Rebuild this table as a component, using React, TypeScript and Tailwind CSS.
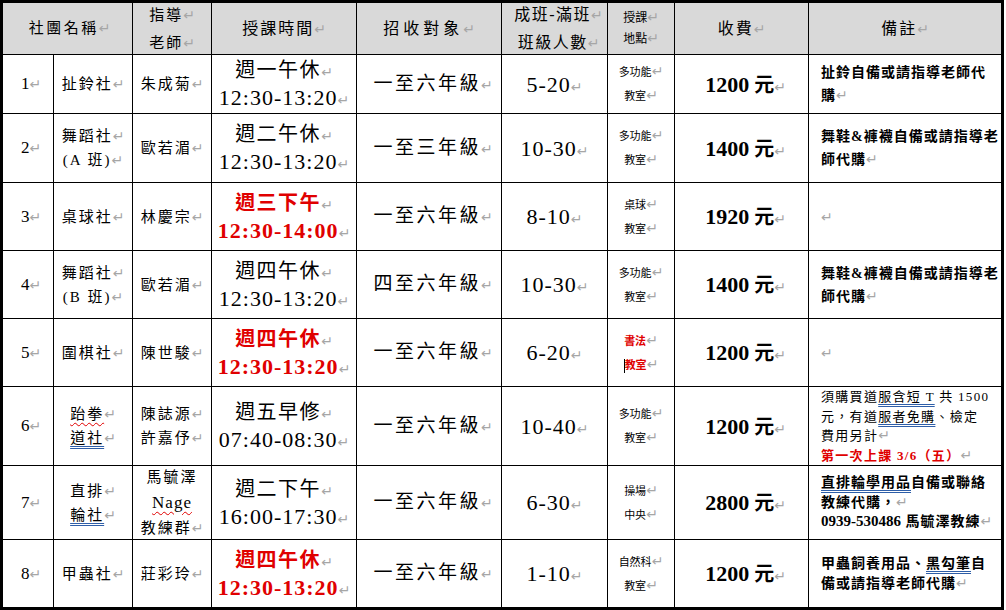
import React, { ReactNode } from "react";

function M() {
  return (
    <span className="font-['DejaVu_Sans',sans-serif] text-[14px] leading-none font-normal text-[#a6a6a6] tracking-normal no-underline">
      ↵
    </span>
  );
}

const blueU = "underline decoration-double decoration-[#2e5ea8] underline-offset-[3px] decoration-1";
const redW = "underline decoration-wavy decoration-[#e00000] underline-offset-[3px] decoration-1";

const cell = "bg-white flex flex-col items-center justify-center text-center";

function L({ children }: { children: ReactNode }) {
  return <div className="whitespace-nowrap">{children}</div>;
}

function Loc({ a, b, red }: { a: string; b: string; red?: boolean }) {
  return (
    <div className={`text-[11px] leading-[24px] ${red ? "text-[#e00000] font-bold" : "text-black"}`}>
      <div className="whitespace-nowrap">
        {a}
        <M />
      </div>
      <div className="whitespace-nowrap">
        {red ? <span className="inline-block w-px h-[14px] bg-black align-middle" /> : null}
        {b}
        <M />
      </div>
    </div>
  );
}

type Row = {
  n: string;
  name: ReactNode;
  teacher: ReactNode;
  day: string;
  time: string;
  red?: boolean;
  target: string;
  size: string;
  loc: ReactNode;
  fee: string;
  note: ReactNode;
};

const noteA = (
  <div className="font-bold text-[14px] leading-[23px] tracking-[1px]">
    <L>扯鈴自備或請指導老師代</L>
    <L>
      購<M />
    </L>
  </div>
);

const noteB = (
  <div className="font-bold text-[14px] leading-[23px] tracking-[1px]">
    <L>舞鞋&amp;褲襪自備或請指導老</L>
    <L>
      師代購<M />
    </L>
  </div>
);

const noteEmpty = (
  <div className="leading-[20px]">
    <M />
  </div>
);

const note6 = (
  <div className="text-[13px] leading-[19.5px] tracking-[1.3px]">
    <L>
      須購買道<span className={blueU}>服含短 T</span> 共 1500
    </L>
    <L>
      元，有道<span className={blueU}>服者免購</span>、檢定
    </L>
    <L>
      費用另計<M />
    </L>
    <L>
      <span className="font-bold text-[#e00000] tracking-[1.3px]">第一次上課 3/6（五）</span>
      <M />
    </L>
  </div>
);

const note7 = (
  <div className="font-bold text-[14px] leading-[19.5px] tracking-[1px]">
    <L>
      <span className={blueU}>直排輪學用品</span>自備或聯絡
    </L>
    <L>
      教練代購，<M />
    </L>
    <L>
      <span className="text-[15px] tracking-normal">0939-530486</span> 馬毓澤教練
      <M />
    </L>
  </div>
);

const note8 = (
  <div className="font-bold text-[14px] leading-[20px] tracking-[1px]">
    <L>
      甲蟲飼養用品、<span className={blueU}>黑勾筆</span>自
    </L>
    <L>
      備或請指導老師代購<M />
    </L>
  </div>
);

const rows: Row[] = [
  {
    n: "1",
    name: (
      <L>
        扯鈴社<M />
      </L>
    ),
    teacher: (
      <L>
        朱成菊<M />
      </L>
    ),
    day: "週一午休",
    time: "12:30-13:20",
    target: "一至六年級",
    size: "5-20",
    loc: <Loc a="多功能" b="教室" />,
    fee: "1200",
    note: noteA,
  },
  {
    n: "2",
    name: (
      <>
        <L>
          舞蹈社<M />
        </L>
        <L>
          (A 班)<M />
        </L>
      </>
    ),
    teacher: (
      <L>
        歐若湄<M />
      </L>
    ),
    day: "週二午休",
    time: "12:30-13:20",
    target: "一至三年級",
    size: "10-30",
    loc: <Loc a="多功能" b="教室" />,
    fee: "1400",
    note: noteB,
  },
  {
    n: "3",
    name: (
      <L>
        桌球社<M />
      </L>
    ),
    teacher: (
      <L>
        林慶宗<M />
      </L>
    ),
    day: "週三下午",
    time: "12:30-14:00",
    red: true,
    target: "一至六年級",
    size: "8-10",
    loc: <Loc a="桌球" b="教室" />,
    fee: "1920",
    note: noteEmpty,
  },
  {
    n: "4",
    name: (
      <>
        <L>
          舞蹈社<M />
        </L>
        <L>
          (B 班)<M />
        </L>
      </>
    ),
    teacher: (
      <L>
        歐若湄<M />
      </L>
    ),
    day: "週四午休",
    time: "12:30-13:20",
    target: "四至六年級",
    size: "10-30",
    loc: <Loc a="多功能" b="教室" />,
    fee: "1400",
    note: noteB,
  },
  {
    n: "5",
    name: (
      <L>
        圍棋社<M />
      </L>
    ),
    teacher: (
      <L>
        陳世駿<M />
      </L>
    ),
    day: "週四午休",
    time: "12:30-13:20",
    red: true,
    target: "一至六年級",
    size: "6-20",
    loc: <Loc a="書法" b="教室" red />,
    fee: "1200",
    note: noteEmpty,
  },
  {
    n: "6",
    name: (
      <>
        <L>
          <span className={redW}>跆拳</span>
          <M />
        </L>
        <L>
          <span className={blueU}>道社</span>
          <M />
        </L>
      </>
    ),
    teacher: (
      <>
        <L>
          陳誌源<M />
        </L>
        <L>
          許嘉伃<M />
        </L>
      </>
    ),
    day: "週五早修",
    time: "07:40-08:30",
    target: "一至六年級",
    size: "10-40",
    loc: <Loc a="多功能" b="教室" />,
    fee: "1200",
    note: note6,
  },
  {
    n: "7",
    name: (
      <>
        <L>
          直排<M />
        </L>
        <L>
          <span className={blueU}>輪社</span>
          <M />
        </L>
      </>
    ),
    teacher: (
      <div className="leading-[25px]">
        <L>馬毓澤</L>
        <L>
          <span className={`${redW} text-[17px] tracking-[1px]`}>Nage</span>
        </L>
        <L>
          教練群<M />
        </L>
      </div>
    ),
    day: "週二下午",
    time: "16:00-17:30",
    target: "一至六年級",
    size: "6-30",
    loc: <Loc a="操場" b="中央" />,
    fee: "2800",
    note: note7,
  },
  {
    n: "8",
    name: (
      <L>
        甲蟲社<M />
      </L>
    ),
    teacher: (
      <L>
        莊彩玲<M />
      </L>
    ),
    day: "週四午休",
    time: "12:30-13:20",
    red: true,
    target: "一至六年級",
    size: "1-10",
    loc: <Loc a="自然科" b="教室" />,
    fee: "1200",
    note: note8,
  },
];

export default function App() {
  return (
    <div className="w-[1006px] h-[610px] bg-white overflow-hidden">
      <div className="w-[1004px] h-[610px] border-[3px] border-black bg-black grid gap-px grid-cols-[50px_78px_78px_144px_144px_105px_66px_133px_192px] grid-rows-[51px_58px_68px_67px_67px_67px_78px_73px_67px] font-['Liberation_Serif','Noto_Sans_CJK_TC',serif] text-black">
        <div className="col-span-2 bg-[#d9d9d9] flex items-center justify-center text-[15px] tracking-[2.5px] pl-1">
          <span>
            社團名稱<M />
          </span>
        </div>
        <div className="bg-[#d9d9d9] flex flex-col items-center justify-center text-[15px] leading-[28px] tracking-[2px]">
          <L>
            指導<M />
          </L>
          <L>
            老師<M />
          </L>
        </div>
        <div className="bg-[#d9d9d9] flex items-center justify-center text-[16px] tracking-[2px]">
          <span>
            授課時間<M />
          </span>
        </div>
        <div className="bg-[#d9d9d9] flex items-center justify-center text-[16px] tracking-[4px]">
          <span>
            招收對象<M />
          </span>
        </div>
        <div className="bg-[#d9d9d9] flex flex-col items-center justify-center text-[16px] leading-[28px] tracking-[1.5px] pl-2">
          <L>
            成班-滿班<M />
          </L>
          <L>
            班級人數<M />
          </L>
        </div>
        <div className="bg-[#d9d9d9] flex flex-col items-center justify-center text-[12px] leading-[21px]">
          <L>
            授課<M />
          </L>
          <L>
            地點<M />
          </L>
        </div>
        <div className="bg-[#d9d9d9] flex items-center justify-center text-[16px] tracking-[2px]">
          <span>
            收費<M />
          </span>
        </div>
        <div className="bg-[#d9d9d9] flex items-center justify-center text-[16px] tracking-[2px]">
          <span>
            備註<M />
          </span>
        </div>

        {rows.map((r) => (
          <React.Fragment key={r.n}>
            <div className={`${cell} text-[17px] pl-[6px]`}>
              <span>
                {r.n}
                <M />
              </span>
            </div>
            <div className={`${cell} text-[15px] leading-[24px] tracking-[2px]`}>{r.name}</div>
            <div className={`${cell} text-[15px] leading-[24px] tracking-[2px]`}>{r.teacher}</div>
            <div className={`${cell} ${r.red ? "text-[#e00000] font-bold" : "text-black"}`}>
              <div className="text-[20px] leading-[27px] tracking-[1.5px] whitespace-nowrap">
                {r.day}
                <M />
              </div>
              <div className="text-[22px] leading-[27px] tracking-[1px] whitespace-nowrap">
                {r.time}
                <M />
              </div>
            </div>
            <div className={`${cell} text-[19px] tracking-[2.5px] pl-2`}>
              <span className="whitespace-nowrap">
                {r.target}
                <M />
              </span>
            </div>
            <div className={`${cell} text-[22px] tracking-[1px]`}>
              <span className="whitespace-nowrap">
                {r.size}
                <M />
              </span>
            </div>
            <div className={cell}>{r.loc}</div>
            <div className={`${cell} font-bold pl-2`}>
              <span className="whitespace-nowrap">
                <span className="text-[22px]">{r.fee}</span>
                <span className="text-[20px]"> 元</span>
                <M />
              </span>
            </div>
            <div className="bg-white flex flex-col justify-center items-start pl-3 text-left">{r.note}</div>
          </React.Fragment>
        ))}
      </div>
    </div>
  );
}
